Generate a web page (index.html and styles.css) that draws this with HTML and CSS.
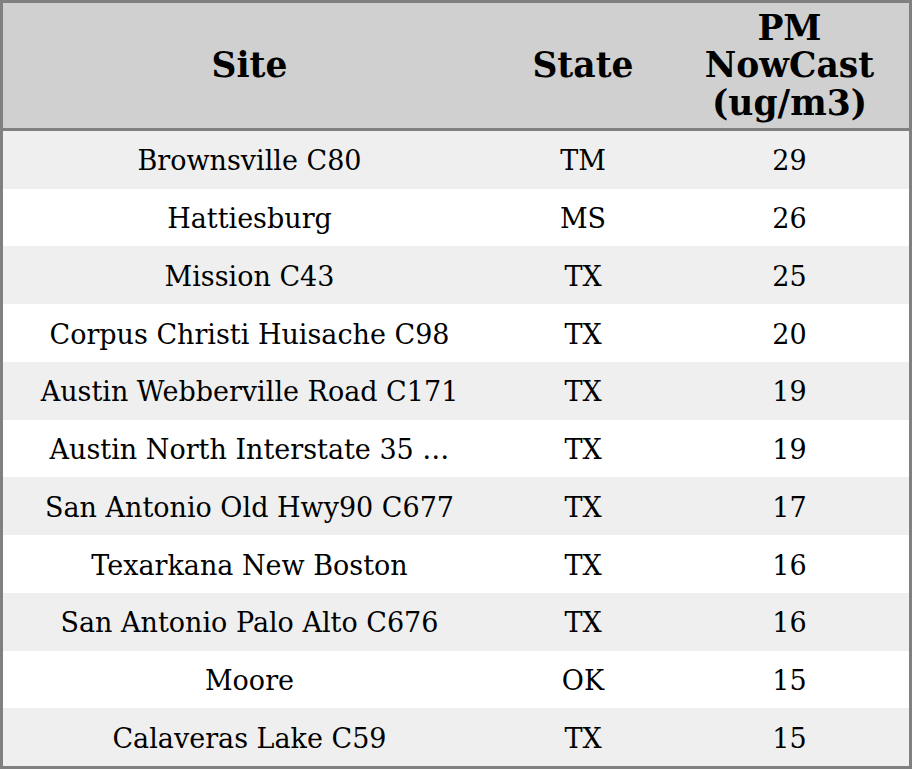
FILE: index.html
```html
<!DOCTYPE html>
<html>
<head>
<meta charset="utf-8">
<link rel="stylesheet" href="styles.css">
</head>
<body>
<div class="table">
  <div class="row head">
    <div class="cell">Site</div>
    <div class="cell">State</div>
    <div class="cell">PM<br>NowCast<br>(ug/m3)</div>
  </div>
  <div class="row odd"><div class="cell">Brownsville C80</div><div class="cell">TM</div><div class="cell">29</div></div>
  <div class="row"><div class="cell">Hattiesburg</div><div class="cell">MS</div><div class="cell">26</div></div>
  <div class="row odd"><div class="cell">Mission C43</div><div class="cell">TX</div><div class="cell">25</div></div>
  <div class="row"><div class="cell">Corpus Christi Huisache C98</div><div class="cell">TX</div><div class="cell">20</div></div>
  <div class="row odd"><div class="cell">Austin Webberville Road C171</div><div class="cell">TX</div><div class="cell">19</div></div>
  <div class="row"><div class="cell">Austin North Interstate 35 …</div><div class="cell">TX</div><div class="cell">19</div></div>
  <div class="row odd"><div class="cell">San Antonio Old Hwy90 C677</div><div class="cell">TX</div><div class="cell">17</div></div>
  <div class="row"><div class="cell">Texarkana New Boston</div><div class="cell">TX</div><div class="cell">16</div></div>
  <div class="row odd"><div class="cell">San Antonio Palo Alto C676</div><div class="cell">TX</div><div class="cell">16</div></div>
  <div class="row"><div class="cell">Moore</div><div class="cell">OK</div><div class="cell">15</div></div>
  <div class="row odd"><div class="cell">Calaveras Lake C59</div><div class="cell">TX</div><div class="cell">15</div></div>
</div>
</body>
</html>
```
FILE: styles.css
```css
html, body {
  margin: 0;
  padding: 0;
  background: #ffffff;
}
.table {
  box-sizing: border-box;
  width: 912px;
  height: 769px;
  border: 3px solid #808080;
  display: flex;
  flex-direction: column;
  overflow: hidden;
  font-family: "DejaVu Serif", serif;
  color: #000;
}
.row {
  display: grid;
  grid-template-columns: 493px 174px 1fr;
  flex: 1 1 0;
  align-items: center;
  background: #ffffff;
  font-size: 27px;
}
.row .cell {
  padding-top: 2px;
}
.row.odd {
  background: #efefef;
}
.row.head {
  flex: 0 0 125px;
  background: #d0d0d0;
  border-bottom: 3px solid #808080;
  font-size: 34.5px;
  font-weight: bold;
  line-height: 37.5px;
}
.row.head .cell {
  padding-top: 1px;
}
.cell {
  text-align: center;
  white-space: nowrap;
}
```
